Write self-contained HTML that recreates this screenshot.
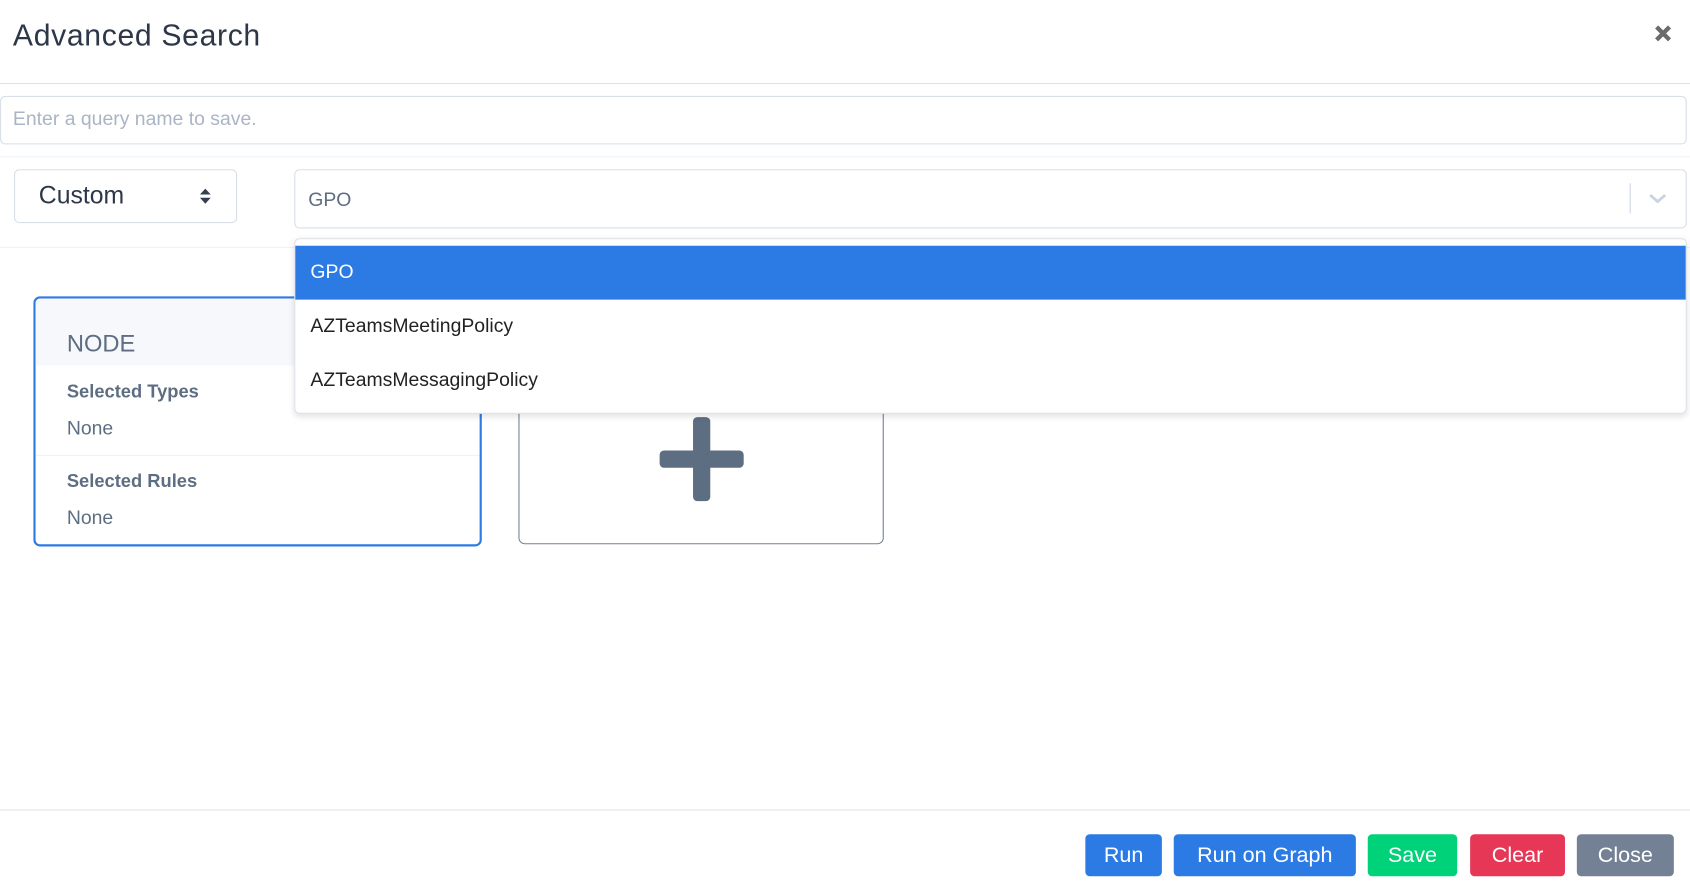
<!DOCTYPE html>
<html><head><meta charset="utf-8"><style>
html,body{margin:0;padding:0;background:#fff;overflow:hidden;width:1690px;height:889px}
#w{position:absolute;left:0;top:0;width:1568px;height:825px;transform:scale(1.07781);transform-origin:0 0;font-family:"Liberation Sans",sans-serif}
.a{position:absolute}
.line{position:absolute;left:0;width:1568px;height:1px}
.btn{position:absolute;top:774px;height:39px;border-radius:4px;color:#fff;font-size:20px;line-height:41px;text-align:center}
</style></head><body><div id="w">
<div class="a" style="left:12px;top:17px;font-size:28px;letter-spacing:0.6px;color:#2d3748">Advanced Search</div>
<svg class="a" style="left:1535px;top:23px" width="16" height="16" viewBox="0 0 16 16"><path d="M2 2L14 14M14 2L2 14" stroke="#6b6b6b" stroke-width="4"/></svg>
<div class="line" style="top:77px;background:#dde3ea"></div>
<div class="a" style="left:0;top:89px;width:1563px;height:43px;border:1px solid #d8dfe9;border-radius:5px"></div>
<div class="a" style="left:12px;top:100px;font-size:18px;color:#aab4c4">Enter a query name to save.</div>
<div class="line" style="top:145px;background:#eef1f5"></div>
<div class="a" style="left:13px;top:157px;width:205px;height:48px;border:1px solid #d8dfe9;border-radius:5px"></div>
<div class="a" style="left:36px;top:168px;font-size:23px;color:#2d3748">Custom</div>
<svg class="a" style="left:185px;top:174px" width="11" height="16" viewBox="0 0 11 16"><path d="M0.5 6.5L5.5 1L10.5 6.5Z M0.5 9.5L5.5 15L10.5 9.5Z" fill="#344050"/></svg>
<div class="a" style="left:273px;top:157px;width:1290px;height:53px;border:1px solid #d8dfe9;border-radius:5px"></div>
<div class="a" style="left:286px;top:175px;font-size:18px;color:#5e6e82">GPO</div>
<div class="a" style="left:1512px;top:170px;width:1px;height:28px;background:#cfd8e6"></div>
<svg class="a" style="left:1529px;top:179px" width="18" height="10" viewBox="0 0 18 10"><path d="M2 2L9 8L16 2" stroke="#c8d2e0" stroke-width="2.5" fill="none"/></svg>
<div class="line" style="top:229px;background:#eef1f5"></div>
<div class="a" style="left:31px;top:275px;width:412px;height:228px;border:2px solid #2c7be5;border-radius:6px;overflow:hidden">
 <div class="a" style="left:0;top:0;width:412px;height:62px;background:#f7f8fc"></div>
 <div class="a" style="left:29px;top:29px;font-size:22px;color:#5e6e82">NODE</div>
 <div class="a" style="left:29px;top:77px;font-size:17px;font-weight:bold;color:#5e6e82">Selected Types</div>
 <div class="a" style="left:29px;top:110px;font-size:18px;color:#5e6e82">None</div>
 <div class="a" style="left:0;top:145px;width:412px;height:1px;background:#eef1f5"></div>
 <div class="a" style="left:29px;top:160px;font-size:17px;font-weight:bold;color:#5e6e82">Selected Rules</div>
 <div class="a" style="left:29px;top:193px;font-size:18px;color:#5e6e82">None</div>
</div>
<div class="a" style="left:481px;top:275px;width:337px;height:228px;border:1px solid #748194;border-radius:6px"></div>
<div class="a" style="left:643px;top:387px;width:16px;height:78px;background:#5d6e82;border-radius:4px"></div>
<div class="a" style="left:612px;top:418px;width:78px;height:16px;background:#5d6e82;border-radius:4px"></div>
<div class="a" style="left:273px;top:221px;width:1290px;height:161px;background:#fff;border:1px solid #dde3ea;border-radius:5px;box-shadow:0 2px 6px rgba(0,0,0,.12)">
 <div class="a" style="left:0;top:6px;width:1290px;height:50px;background:#2c7be5"></div>
 <div class="a" style="left:14px;top:20px;font-size:18px;color:#fff">GPO</div>
 <div class="a" style="left:14px;top:70px;font-size:18px;color:#222">AZTeamsMeetingPolicy</div>
 <div class="a" style="left:14px;top:120px;font-size:18px;color:#222">AZTeamsMessagingPolicy</div>
</div>
<div class="line" style="top:751px;background:#dde3ea"></div>
<div class="btn" style="left:1007px;width:71px;background:#2c7be5">Run</div>
<div class="btn" style="left:1089px;width:169px;background:#2c7be5">Run on Graph</div>
<div class="btn" style="left:1269px;width:83px;background:#00d27a">Save</div>
<div class="btn" style="left:1364px;width:88px;background:#e63757">Clear</div>
<div class="btn" style="left:1463px;width:90px;background:#748194">Close</div>
</div></body></html>
